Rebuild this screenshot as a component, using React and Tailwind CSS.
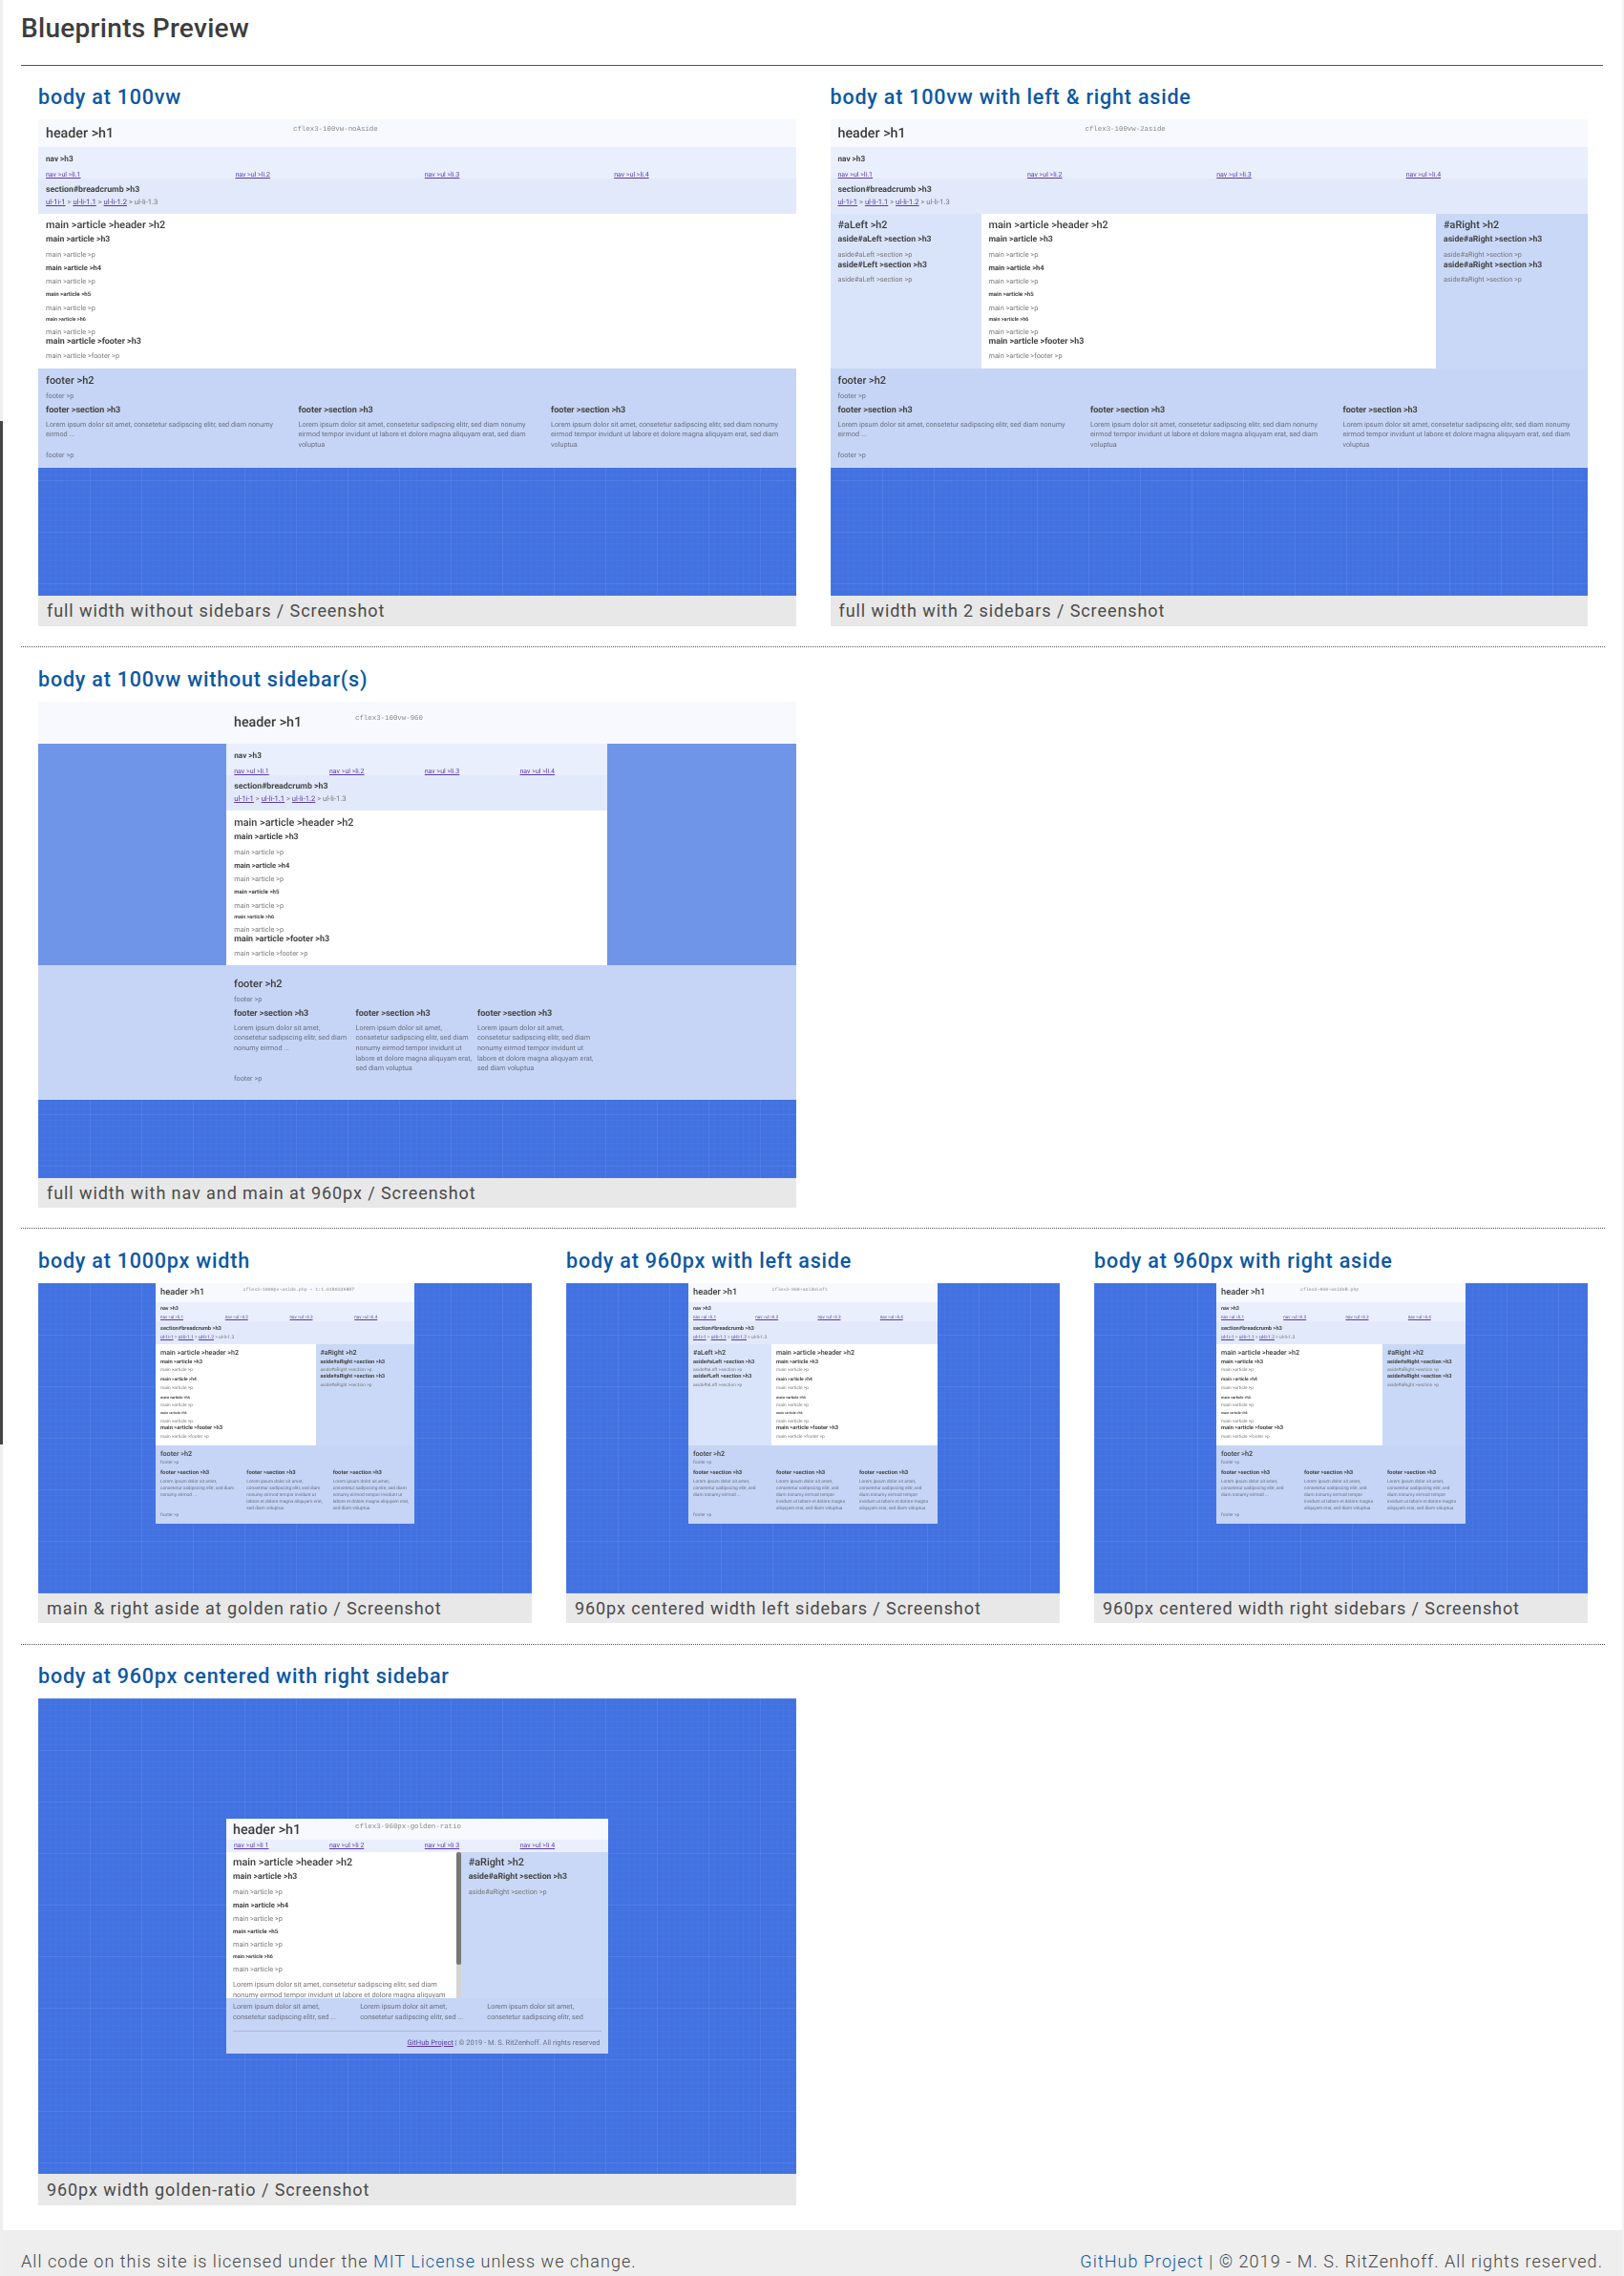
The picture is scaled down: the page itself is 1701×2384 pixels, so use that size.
const GRID =
  "bg-[#4272e1] bg-[linear-gradient(rgba(255,255,255,0.025)_1px,transparent_1px),linear-gradient(90deg,rgba(255,255,255,0.025)_1px,transparent_1px),linear-gradient(rgba(255,255,255,0.05)_1px,transparent_1px),linear-gradient(90deg,rgba(255,255,255,0.05)_1px,transparent_1px)] bg-[size:6px_6px,6px_6px,54px_54px,54px_54px]";

const HD = "font-medium text-[#3b3b3b] whitespace-nowrap";
const HB = "font-bold text-[#444444] whitespace-nowrap";
const TX = "text-[#777] whitespace-nowrap";

const BIG = {
  h1: "text-[14.3px] font-medium text-[#3b3b3b] whitespace-nowrap",
  note: "font-['Liberation_Mono',monospace] text-[7.4px] text-[#8a8a8a] whitespace-nowrap",
  navH: "h-[16px] leading-[16px] text-[8.2px]",
  li: "h-[16px] leading-[16px] text-[7px]",
  navBox: "h-[33px] pt-[5px]",
  bcBox: "h-[37px] pt-[5px]",
  bcH: "h-[14px] leading-[14px] text-[8.75px]",
  bcL: "h-[12px] leading-[12px] text-[7.6px]",
  m: "pt-[4px] pl-[8px]",
  mainH: "h-[162px]",
  h2: "h-[16px] leading-[16px] text-[10.85px]",
  h3: "h-[15px] leading-[15px] text-[8.7px]",
  p1: "h-[16px] leading-[16px] text-[7.3px]",
  h4: "h-[12px] leading-[12px] text-[7.5px]",
  p2: "h-[16px] leading-[16px] text-[7.3px]",
  h5: "h-[12px] leading-[12px] text-[6.1px]",
  p3: "h-[15px] leading-[15px] text-[7.3px]",
  h6: "h-[11px] leading-[11px] text-[5.4px]",
  p4: "h-[14px] leading-[14px] text-[7.3px]",
  fh3: "h-[6px] leading-[6px] text-[8.9px]",
  fp: "h-[24px] leading-[24px] text-[7.3px]",
  ap1: "h-[16px] leading-[16px] text-[7.3px]",
  ah3: "h-[6px] leading-[6px] text-[8.7px]",
  ap2: "h-[24px] leading-[24px] text-[7.3px]",
  fH2: "h-[14px] leading-[14px] text-[11px]",
  fP: "h-[18px] leading-[18px] text-[7.3px]",
  fH3: "h-[12px] leading-[12px] text-[9px]",
  lorem: "pt-[3.7px] pb-[0px]",
  lore: "h-[10.7px] leading-[10.7px] text-[7.28px]",
  fEnd: "h-[10.7px] leading-[10.7px] text-[7.3px]",
};

const SMALL = {
  h1: "text-[9.3px] font-medium text-[#3b3b3b] whitespace-nowrap",
  note: "font-['Liberation_Mono',monospace] text-[4.87px] text-[#8a8a8a] whitespace-nowrap",
  navH: "h-[10px] leading-[10px] text-[5.4px]",
  li: "mt-[2px] h-[6px] leading-[6px] text-[4.6px]",
  navBox: "h-[20px] pt-[2px]",
  bcBox: "h-[24px] pt-[3px]",
  bcH: "h-[10px] leading-[10px] text-[5.7px]",
  bcL: "h-[8px] leading-[8px] text-[5px]",
  m: "pt-[3px] pl-[5px]",
  mainH: "h-[106px]",
  h2: "h-[11px] leading-[11px] text-[7.1px]",
  h3: "h-[10px] leading-[10px] text-[5.7px]",
  p1: "h-[8px] leading-[8px] text-[4.8px]",
  h4: "h-[11px] leading-[11px] text-[4.9px]",
  p2: "h-[7px] leading-[7px] text-[4.8px]",
  h5: "h-[11px] leading-[11px] text-[4px]",
  p3: "h-[7px] leading-[7px] text-[4.8px]",
  h6: "h-[9px] leading-[9px] text-[3.55px]",
  p4: "h-[9px] leading-[9px] text-[4.8px]",
  fh3: "h-[4px] leading-[4px] text-[5.8px]",
  fp: "h-[15px] leading-[15px] text-[4.8px]",
  ap1: "h-[8px] leading-[8px] text-[4.8px]",
  ah3: "h-[5.4px] leading-[5.4px] text-[5.7px]",
  ap2: "h-[14px] leading-[14px] text-[4.8px]",
  fH2: "h-[11px] leading-[11px] text-[7.2px]",
  fP: "h-[10px] leading-[10px] text-[4.8px]",
  fH3: "h-[10px] leading-[10px] text-[5.9px]",
  lorem: "pt-[1.2px]",
  lore: "h-[7px] leading-[7px] text-[4.76px]",
  fEnd: "h-[7px] leading-[7px] text-[4.8px]",
};

const A = "text-[#5b3aa6] underline";

function Nav({ S, pad }) {
  return (
    <div className={`${S.navBox} bg-[#e9effd]`}>
      <div className={`${pad} ${HB} ${S.navH}`}>{"nav >h3"}</div>
      <div className="grid grid-cols-4">
        {[1, 2, 3, 4].map((n) => (
          <div key={n} className={`${pad} ${S.li} whitespace-nowrap`}>
            <span className={A}>{`nav >ul >li.${n}`}</span>
          </div>
        ))}
      </div>
    </div>
  );
}

function Crumb({ S, pad }) {
  return (
    <div className={`${S.bcBox} ${pad} bg-[#e2e9fa]`}>
      <div className={`${HB} ${S.bcH}`}>{"section#breadcrumb >h3"}</div>
      <div className={`${S.bcL} ${TX}`}>
        <span className={A}>ul-1i-1</span>
        {" > "}
        <span className={A}>ul-li-1.1</span>
        {" > "}
        <span className={A}>ul-li-1.2</span>
        {" > ul-li-1.3"}
      </div>
    </div>
  );
}

function Article({ S, extra }) {
  return (
    <div className={`${S.m} ${S.mainH} ${extra || ""} min-w-0 flex-1 bg-white`}>
      <div className={`${HD} ${S.h2}`}>{"main >article >header >h2"}</div>
      <div className={`${HB} ${S.h3}`}>{"main >article >h3"}</div>
      <div className={`${TX} ${S.p1}`}>{"main >article >p"}</div>
      <div className={`${HB} ${S.h4}`}>{"main >article >h4"}</div>
      <div className={`${TX} ${S.p2}`}>{"main >article >p"}</div>
      <div className={`${HB} ${S.h5}`}>{"main >article >h5"}</div>
      <div className={`${TX} ${S.p3}`}>{"main >article >p"}</div>
      <div className={`${HB} ${S.h6}`}>{"main >article >h6"}</div>
      <div className={`${TX} ${S.p4}`}>{"main >article >p"}</div>
      <div className={`${HB} ${S.fh3}`}>{"main >article >footer >h3"}</div>
      <div className={`${TX} ${S.fp}`}>{"main >article >footer >p"}</div>
    </div>
  );
}

function Aside({ S, id, sec2, cls }) {
  return (
    <div className={`${S.m} ${cls}`}>
      <div className={`${HD} ${S.h2}`}>{`#${id} >h2`}</div>
      <div className={`${HB} ${S.h3}`}>{`aside#${id} >section >h3`}</div>
      <div className={`${TX} ${S.ap1}`}>{`aside#${id} >section >p`}</div>
      <div className={`${HB} ${S.ah3}`}>{`${sec2 || `aside#${id}`} >section >h3`}</div>
      <div className={`${TX} ${S.ap2}`}>{`aside#${id} >section >p`}</div>
    </div>
  );
}

function Foot({ S, pad, cols, cell, top, grid }) {
  return (
    <div className={`${top} bg-[#c6d5f5]`}>
      <div className={`${pad} ${HD} ${S.fH2}`}>{"footer >h2"}</div>
      <div className={`${pad} whitespace-nowrap text-[#6a7080] ${S.fP}`}>{"footer >p"}</div>
      <div className={grid}>
        {cols.map((lines, i) => (
          <div key={i} className={cell}>
            <div className={`${HB} ${S.fH3}`}>{"footer >section >h3"}</div>
            <div className={S.lorem}>
              {lines.map((l, j) => (
                <div key={j} className={`${S.lore} whitespace-nowrap text-[#6a7080]`}>
                  {l}
                </div>
              ))}
            </div>
          </div>
        ))}
      </div>
      <div className={`${pad} whitespace-nowrap text-[#6a7080] ${S.fEnd}`}>{"footer >p"}</div>
    </div>
  );
}

const W2 = ["Lorem ipsum dolor sit amet, consetetur sadipscing elitr, sed diam nonumy", "eirmod ..."];
const W3 = [
  "Lorem ipsum dolor sit amet, consetetur sadipscing elitr, sed diam nonumy",
  "eirmod tempor invidunt ut labore et dolore magna aliquyam erat, sed diam",
  "voluptua",
];
const N3 = ["Lorem ipsum dolor sit amet,", "consetetur sadipscing elitr, sed diam", "nonumy eirmod ..."];
const N5 = [
  "Lorem ipsum dolor sit amet,",
  "consetetur sadipscing elitr, sed diam",
  "nonumy eirmod tempor invidunt ut",
  "labore et dolore magna aliquyam erat,",
  "sed diam voluptua",
];
const S3 = ["Lorem ipsum dolor sit amet,", "consetetur sadipscing elitr, sed", "diam nonumy eirmod ..."];
const S5 = [
  "Lorem ipsum dolor sit amet,",
  "consetetur sadipscing elitr, sed",
  "diam nonumy eirmod tempor",
  "invidunt ut labore et dolore magna",
  "aliquyam erat, sed diam voluptua",
];

function Head({ S, cls, h1cls, noteCls, note }) {
  return (
    <div className={`flex bg-[#f8f9fe] ${cls}`}>
      <div className={`${S.h1} ${h1cls}`}>{"header >h1"}</div>
      <div className={`${S.note} ${noteCls}`}>{note}</div>
    </div>
  );
}

function Shot({ children, cls }) {
  return (
    <div className={`${GRID} flex flex-col overflow-hidden blur-[0.35px] [text-rendering:geometricPrecision] ${cls}`}>
      {children}
    </div>
  );
}

function Full({ note, asides }) {
  return (
    <Shot cls="h-[499px]">
      <Head S={BIG} cls="h-[29px]" h1cls="w-[267px] pl-[8px] leading-[30px]" noteCls="leading-[23px]" note={note} />
      <Nav S={BIG} pad="pl-[8px]" />
      <Crumb S={BIG} pad="pl-[8px]" />
      {asides ? (
        <div className="flex">
          <Aside S={BIG} id="aLeft" sec2="aside#Left" cls="w-[158px] bg-[#d9e4fa]" />
          <Article S={BIG} />
          <Aside S={BIG} id="aRight" cls="w-[159px] bg-[#c9d8f6]" />
        </div>
      ) : (
        <Article S={BIG} extra="flex-none" />
      )}
      <Foot
        S={BIG}
        pad="pl-[8px]"
        top="h-[104px] pt-[6px]"
        cols={[W2, W3, W3]}
        grid="grid grid-cols-3"
        cell="pl-[8px]"
      />
    </Shot>
  );
}

function Centered() {
  return (
    <Shot cls="h-[499px]">
      <Head
        S={BIG}
        cls="h-[44px]"
        h1cls="w-[332px] pl-[205px] leading-[44px]"
        noteCls="leading-[36px]"
        note="cflex3-100vw-960"
      />
      <div className="flex justify-center bg-[#6f95e8]">
        <div className="w-[399px]">
          <Nav S={BIG} pad="pl-[8px]" />
          <Crumb S={BIG} pad="pl-[8px]" />
          <div className="flex">
            <Article S={BIG} extra="pt-[5px]" />
          </div>
        </div>
      </div>
      <Foot
        S={BIG}
        pad="pl-[205px]"
        top="h-[141px] pt-[13px]"
        cols={[N3, N5, N5]}
        grid="ml-[205px] grid w-[382.5px] grid-cols-3"
        cell=""
      />
    </Shot>
  );
}

function Small({ width, h1w, note, left, right, asideW, cols }) {
  return (
    <Shot cls="h-[325px] items-center">
      <div className={width}>
        <Head S={SMALL} cls="h-[20px]" h1cls={`${h1w} pl-[5px] leading-[19px]`} noteCls="leading-[15px]" note={note} />
        <Nav S={SMALL} pad="pl-[5px]" />
        <Crumb S={SMALL} pad="pl-[5px]" />
        <div className="flex">
          {left && <Aside S={SMALL} id="aLeft" sec2="aside#Left" cls={`${asideW} bg-[#d9e4fa]`} />}
          <Article S={SMALL} />
          {right && <Aside S={SMALL} id="aRight" cls={`${asideW} bg-[#c9d8f6]`} />}
        </div>
        <Foot S={SMALL} pad="pl-[5px]" top="h-[82px] pt-[3px]" cols={cols} grid="grid grid-cols-3" cell="pl-[5px]" />
      </div>
    </Shot>
  );
}

function Golden() {
  const R4 = ["Lorem ipsum dolor sit amet,", "consetetur sadipscing elitr, sed ..."];
  const R4b = ["Lorem ipsum dolor sit amet,", "consetetur sadipscing elitr, sed"];
  const S = BIG;
  return (
    <Shot cls="h-[498px] items-center justify-center">
      <div className="w-[399.5px]">
        <Head
          S={BIG}
          cls="h-[22px]"
          h1cls="w-[135px] pl-[7px] leading-[25px]"
          noteCls="leading-[19px]"
          note="cflex3-960px-golden-ratio"
        />
        <div className="grid h-[13px] grid-cols-4 bg-[#e9effd]">
          {[1, 2, 3, 4].map((n) => (
            <div key={n} className="h-[13px] pl-[8px] text-[7px] leading-[13px] whitespace-nowrap">
              <span className={A}>{`nav >ul >li ${n}`}</span>
            </div>
          ))}
        </div>
        <div className="flex h-[153px]">
          <div className="flex w-[246px]">
            <div className="min-w-0 flex-1 overflow-hidden bg-white pt-[3px] pl-[7px]">
              <div className={`${HD} ${S.h2}`}>{"main >article >header >h2"}</div>
              <div className={`${HB} ${S.h3}`}>{"main >article >h3"}</div>
              <div className={`${TX} ${S.p1}`}>{"main >article >p"}</div>
              <div className={`${HB} ${S.h4}`}>{"main >article >h4"}</div>
              <div className={`${TX} ${S.p2}`}>{"main >article >p"}</div>
              <div className={`${HB} ${S.h5}`}>{"main >article >h5"}</div>
              <div className={`${TX} h-[14px] text-[7.3px] leading-[14px]`}>{"main >article >p"}</div>
              <div className={`${HB} h-[12px] text-[5.4px] leading-[12px]`}>{"main >article >h6"}</div>
              <div className={`${TX} ${S.p4}`}>{"main >article >p"}</div>
              <div className="mt-[2.8px] text-[7.4px] leading-[11px] whitespace-nowrap text-[#777]">
                <div>Lorem ipsum dolor sit amet, consetetur sadipscing elitr, sed diam</div>
                <div>nonumy eirmod tempor invidunt ut labore et dolore magna aliquyam</div>
              </div>
            </div>
            <div className="w-[5px] bg-[#d4d4d4]">
              <div className="h-[118px] rounded-[3px] bg-[#777777]" />
            </div>
          </div>
          <div className="flex-1 bg-[#c9d8f6] pt-[3px] pl-[7.7px]">
            <div className={`${HD} ${S.h2}`}>{"#aRight >h2"}</div>
            <div className={`${HB} ${S.h3}`}>{"aside#aRight >section >h3"}</div>
            <div className={`${TX} ${S.p1}`}>{"aside#aRight >section >p"}</div>
          </div>
        </div>
        <div className="h-[58.5px] bg-[#c6d5f5] pt-[4.7px]">
          <div className="grid grid-cols-3">
            {[R4, R4, R4b].map((lines, i) => (
              <div key={i} className="pl-[7px]">
                {lines.map((l, j) => (
                  <div key={j} className="h-[10.7px] text-[7.3px] leading-[10.7px] whitespace-nowrap text-[#6a7080]">
                    {l}
                  </div>
                ))}
              </div>
            ))}
          </div>
          <div className="mx-[7px] mt-[8px] border-t border-[#a8b8d8] pr-[1px] text-right text-[7.5px] leading-[24px] whitespace-nowrap text-[#6a7080]">
            <span className={A}>GitHub Project</span>
            {" | © 2019 - M. S. RitZenhoff. All rights reserved"}
          </div>
        </div>
      </div>
    </Shot>
  );
}

function Card({ title, caption, children, capCls }) {
  return (
    <section className="min-w-0">
      <h2 className="mb-[9px] h-[28px] text-[21.5px] leading-[28px] font-medium tracking-[0.8px] whitespace-nowrap text-[#0b58a3]">
        {title}
      </h2>
      {children}
      <div
        className={`${capCls || "h-[31px] leading-[31px]"} bg-[#e8e8e8] pl-[9px] text-[18px] font-normal tracking-[0.92px] whitespace-nowrap text-[#4a4a4a]`}
      >
        {caption}
      </div>
    </section>
  );
}

function Row({ children, cls, last }) {
  return (
    <div className={last ? "" : "mr-[18px] ml-[19px] border-b border-dotted border-[#555]"}>
      <div className={`${last ? "pr-[36px] pl-[37px]" : "pr-[18px] pl-[18px]"} ${cls}`}>{children}</div>
    </div>
  );
}

export default function App() {
  return (
    <div className="flex h-[2384px] w-[1701px] overflow-hidden bg-white font-['Roboto',sans-serif] text-[#3b3b3b]">
      <div className="w-[3px] flex-none bg-[#efefef]">
        <div className="mt-[441px] h-[1072px] bg-[#444444]" />
      </div>
      <div className="flex min-w-0 flex-1 flex-col">
        <div className="mr-[20px] ml-[19px] h-[69px] border-b border-[#555]">
          <h1 className="pt-[13px] text-[28px] leading-[34px] font-medium tracking-[0.3px] whitespace-nowrap text-[#3d3d3d]">
            Blueprints Preview
          </h1>
        </div>

        <Row cls="grid grid-cols-2 gap-[36px] pt-[19px] pb-[21px]">
          <Card title="body at 100vw" caption="full width without sidebars / Screenshot" capCls="h-[32px] leading-[32px]">
            <Full note="cflex3-100vw-noAside" />
          </Card>
          <Card
            title="body at 100vw with left & right aside"
            caption="full width with 2 sidebars / Screenshot"
            capCls="h-[32px] leading-[32px]"
          >
            <Full note="cflex3-100vw-2aside" asides />
          </Card>
        </Row>

        <Row cls="grid grid-cols-2 gap-[36px] pt-[20px] pb-[21px]">
          <Card title="body at 100vw without sidebar(s)" caption="full width with nav and main at 960px / Screenshot">
            <Centered />
          </Card>
        </Row>

        <Row cls="grid grid-cols-3 gap-[36px] pt-[20px] pb-[22px]">
          <Card title="body at 1000px width" caption="main & right aside at golden ratio / Screenshot">
            <Small
              width="w-[271px]"
              h1w="w-[91.5px]"
              note="cflex3-1000px-aside.php ~ 1:1.6180339887"
              right
              asideW="w-[103.5px]"
              cols={[N3, N5, N5]}
            />
          </Card>
          <Card title="body at 960px with left aside" caption="960px centered width left sidebars / Screenshot">
            <Small
              width="w-[261px]"
              h1w="w-[87.6px]"
              note="cflex3-960-asideLeft"
              left
              asideW="w-[87px]"
              cols={[S3, S5, S5]}
            />
          </Card>
          <Card title="body at 960px with right aside" caption="960px centered width right sidebars / Screenshot">
            <Small
              width="w-[261px]"
              h1w="w-[88px]"
              note="cflex3-960-asideR.php"
              right
              asideW="w-[87px]"
              cols={[S3, S5, S5]}
            />
          </Card>
        </Row>

        <Row last cls="grid grid-cols-2 gap-[36px] pt-[19px]">
          <Card title="body at 960px centered with right sidebar" caption="960px width golden-ratio / Screenshot" capCls="h-[33px] leading-[33px]">
            <Golden />
          </Card>
        </Row>

        <footer className="mt-auto flex h-[48px] items-center justify-between bg-[#eeeeee] pt-[16px] pr-[20px] pl-[19px] text-[18px] font-light tracking-[1.05px] whitespace-nowrap text-[#444]">
          <div>
            All code on this site is licensed under the <span className="text-[#0b58a3]">MIT License</span> unless we
            change.
          </div>
          <div>
            <span className="text-[#0b58a3]">GitHub Project</span> | © 2019 - M. S. RitZenhoff. All rights reserved.
          </div>
        </footer>
      </div>
      <div className="w-[2px] flex-none bg-[#f3f3f3]" />
    </div>
  );
}
